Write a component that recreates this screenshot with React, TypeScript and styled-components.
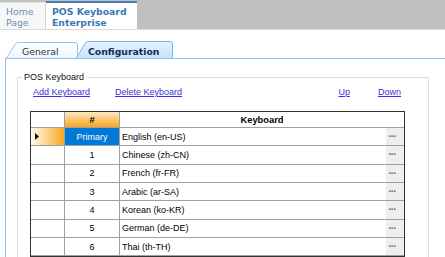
import React from 'react';
import styled, { createGlobalStyle } from 'styled-components';

const GlobalStyle = createGlobalStyle`
  html, body {
    margin: 0;
    padding: 0;
    background: #fff;
    overflow: hidden;
  }
  body {
    width: 445px;
    height: 257px;
    font-family: "DejaVu Sans", Verdana, sans-serif;
  }
`;

const TopBar = styled.div`
  display: flex;
  align-items: flex-end;
  height: 29px;
  background: #c0c0c0;
  border-bottom: 1px solid #dadada;
`;

const PageTab = styled.div<{ $active?: boolean }>`
  box-sizing: border-box;
  width: ${(p) => (p.$active ? '91px' : '46px')};
  height: ${(p) => (p.$active ? '28px' : '27px')};
  padding: 3px 0 0 6px;
  background: ${(p) => (p.$active ? '#fff' : '#f7f7f7')};
  border-top: ${(p) => (p.$active ? '2px solid #4a80b8' : '1px solid #e4e4e4')};
  border-right: ${(p) => (p.$active ? 'none' : '1px solid #d2d2d2')};
  color: ${(p) => (p.$active ? '#3b78b2' : '#6c8fb4')};
  font-weight: ${(p) => (p.$active ? 'bold' : 'normal')};
  font-size: 9.3px;
  line-height: 11px;
  white-space: nowrap;
`;

const Content = styled.div`
  padding: 11px 0 0 5px;
`;

const TabStrip = styled.div`
  display: flex;
  align-items: flex-end;
  height: 17px;
  padding-left: 1px;
`;

const Tab = styled.div<{ $active?: boolean; $w: number }>`
  position: relative;
  box-sizing: border-box;
  width: ${(p) => p.$w}px;
  height: ${(p) => (p.$active ? 17 : 16)}px;
  margin-left: ${(p) => (p.$active ? '-2px' : '0')};
  padding: ${(p) => (p.$active ? '5px 0 0 12px' : '4px 0 0 16px')};
  font-size: 9.3px;
  line-height: 11px;
  font-weight: ${(p) => (p.$active ? 'bold' : 'normal')};
  color: ${(p) => (p.$active ? '#15285a' : '#333')};
  white-space: nowrap;

  svg {
    position: absolute;
    left: 0;
    top: 0;
  }
  span {
    position: relative;
  }
`;

const Panel = styled.div`
  box-sizing: border-box;
  width: 440px;
  height: 199px;
  overflow: hidden;
  border-top: 1px solid #8bbff0;
  border-left: 1px solid #8bbff0;
  padding: 13px 0 0 11px;
`;

const GroupBox = styled.fieldset`
  box-sizing: border-box;
  width: 412px;
  margin: 0;
  padding: 0 0 4px 0;
  border: 1px solid #dcdcdc;
`;

const Legend = styled.legend`
  margin-left: 4px;
  padding: 0 2px;
  font-family: "Liberation Sans", Arial, sans-serif;
  font-size: 9px;
  line-height: 10px;
  color: #111;
`;

const LinkRow = styled.div`
  display: flex;
  padding: 5px 27px 0 15px;
  height: 11px;
  font-family: "Liberation Sans", Arial, sans-serif;
  font-size: 9px;
  line-height: 11px;
`;

const Link = styled.a<{ $gap?: number; $push?: boolean }>`
  color: #3d2fdc;
  text-decoration: underline;
  margin-left: ${(p) => (p.$push ? 'auto' : `${p.$gap ?? 0}px`)};
  cursor: pointer;
`;

const DataGrid = styled.div`
  box-sizing: border-box;
  width: 375px;
  margin: 13px 0 0 12px;
  border: 1px solid #333;
  display: grid;
  grid-template-columns: 34px 55px 1fr;
  font-family: "Liberation Sans", Arial, sans-serif;
  font-size: 9px;
  color: #000;
`;

const HeadCell = styled.div<{ $orange?: boolean; $last?: boolean }>`
  box-sizing: border-box;
  height: 16px;
  display: flex;
  align-items: center;
  justify-content: center;
  font-weight: bold;
  font-size: 9.3px;
  border-bottom: 1px solid #a0a0a0;
  border-right: ${(p) => (p.$last ? 'none' : '1px solid #a0a0a0')};
  background: ${(p) =>
    p.$orange ? 'linear-gradient(to bottom, #fde9c4 0%, #fbc46a 55%, #f8a51c 100%)' : '#fff'};
`;

const RowHead = styled.div<{ $current?: boolean }>`
  box-sizing: border-box;
  height: 18.33px;
  display: flex;
  align-items: center;
  padding-left: 4px;
  border-bottom: 1px solid #a0a0a0;
  border-right: 1px solid #a0a0a0;
  background: ${(p) =>
    p.$current ? 'linear-gradient(to right, #fffaf0 0%, #fcd28a 50%, #f8a51c 100%)' : '#fff'};
`;

const NumCell = styled.div<{ $selected?: boolean }>`
  box-sizing: border-box;
  height: 18.33px;
  display: flex;
  align-items: center;
  justify-content: center;
  border-bottom: 1px solid #a0a0a0;
  border-right: 1px solid #a0a0a0;
  background: ${(p) => (p.$selected ? '#0078d7' : '#fff')};
  color: ${(p) => (p.$selected ? '#fff' : '#000')};
`;

const NameCell = styled.div`
  box-sizing: border-box;
  height: 18.33px;
  display: flex;
  align-items: center;
  padding-left: 2px;
  border-bottom: 1px solid #a0a0a0;
`;

const NameText = styled.span`
  flex: 1;
  white-space: nowrap;
`;

const EllipsisButton = styled.span`
  align-self: stretch;
  width: 18px;
  display: flex;
  align-items: center;
  justify-content: center;
  padding-right: 6px;
  box-sizing: border-box;
  background: #eeeeee;
  color: #6a6a6a;
  font-size: 10px;
  font-weight: bold;
  letter-spacing: -1px;
`;

function TabShape({ w, h, active }: { w: number; h: number; active?: boolean }) {
  const slant = 10;
  const d = `M0.5,${h} L${slant - 1},2.5 Q${slant},0.5 ${slant + 2.5},0.5 L${w - 3},0.5 Q${w - 0.5},0.5 ${w - 0.5},3 L${w - 0.5},${h}`;
  const id = active ? 'tabActive' : 'tabIdle';
  return (
    <svg width={w} height={h} viewBox={`0 0 ${w} ${h}`}>
      <defs>
        <linearGradient id={id} x1="0" y1="0" x2="0" y2="1">
          <stop offset="0" stopColor={active ? '#e3f1fd' : '#ffffff'} />
          <stop offset="1" stopColor={active ? '#c9e3fa' : '#eef6fd'} />
        </linearGradient>
      </defs>
      <path d={d} fill={`url(#${id})`} stroke={active ? '#7ab4ea' : '#93c2ee'} strokeWidth="1" />
    </svg>
  );
}

const rows = [
  { num: 'Primary', name: 'English (en-US)' },
  { num: '1', name: 'Chinese (zh-CN)' },
  { num: '2', name: 'French (fr-FR)' },
  { num: '3', name: 'Arabic (ar-SA)' },
  { num: '4', name: 'Korean (ko-KR)' },
  { num: '5', name: 'German (de-DE)' },
  { num: '6', name: 'Thai (th-TH)' },
];

export default function App() {
  return (
    <>
      <GlobalStyle />
      <TopBar>
        <PageTab>
          Home
          <br />
          Page
        </PageTab>
        <PageTab $active>
          POS Keyboard
          <br />
          Enterprise
        </PageTab>
      </TopBar>
      <Content>
        <TabStrip>
          <Tab $w={72}>
            <TabShape w={72} h={16} />
            <span>General</span>
          </Tab>
          <Tab $w={97} $active>
            <TabShape w={97} h={17} active />
            <span>Configuration</span>
          </Tab>
        </TabStrip>
        <Panel>
          <GroupBox>
            <Legend>POS Keyboard</Legend>
            <LinkRow>
              <Link>Add Keyboard</Link>
              <Link $gap={25}>Delete Keyboard</Link>
              <Link $push>Up</Link>
              <Link $gap={28}>Down</Link>
            </LinkRow>
            <DataGrid>
              <HeadCell />
              <HeadCell $orange>#</HeadCell>
              <HeadCell $last>Keyboard</HeadCell>
              {rows.map((r, i) => (
                <React.Fragment key={r.num}>
                  <RowHead $current={i === 0}>
                    {i === 0 && (
                      <svg width="4" height="7" viewBox="0 0 4 7">
                        <path d="M0,0 L4,3.5 L0,7 Z" fill="#111" />
                      </svg>
                    )}
                  </RowHead>
                  <NumCell $selected={i === 0}>{r.num}</NumCell>
                  <NameCell>
                    <NameText>{r.name}</NameText>
                    <EllipsisButton>···</EllipsisButton>
                  </NameCell>
                </React.Fragment>
              ))}
            </DataGrid>
          </GroupBox>
        </Panel>
      </Content>
    </>
  );
}
